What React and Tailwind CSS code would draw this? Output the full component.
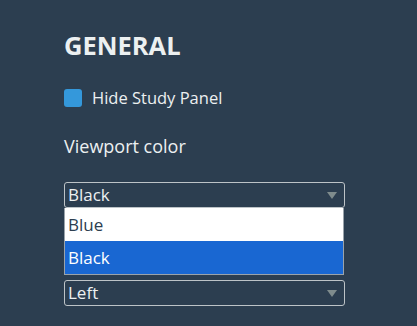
import { useState } from 'react'

const font = { fontFamily: '"Open Sans", "Noto Sans", sans-serif' }

function Arrow() {
  return (
    <svg width="10" height="7" viewBox="0 0 10 7" className="shrink-0">
      <path d="M0 0 L10 0 L5 7 Z" fill="#7f8c8d" />
    </svg>
  )
}

function SelectBox({ value }) {
  return (
    <div className="w-[281px] h-[26px] border border-[#bdc3c7] rounded-[3px] flex items-center justify-between pl-[3px] pr-[7px]">
      <span className="text-[17px] leading-[24px] text-[#ecf0f1]">{value}</span>
      <Arrow />
    </div>
  )
}

export default function App() {
  const [hide, setHide] = useState(false)
  const options = ['Blue', 'Black']
  const selected = 'Black'

  return (
    <div className="min-h-screen bg-[#2c3e50] pl-16 pt-[29px]" style={font}>
      <h2 className="text-[25.5px] leading-[32px] font-bold text-[#ecf0f1]">GENERAL</h2>

      <label className="mt-[25px] flex items-center gap-[10px] cursor-pointer">
        <span
          onClick={() => setHide(!hide)}
          className="w-[18px] h-[18px] rounded-[3px] bg-[#3498db]"
        />
        <span className="text-[16.5px] leading-[24px] text-[#ecf0f1]">Hide Study Panel</span>
      </label>

      <p className="mt-[24px] text-[18px] leading-[24px] text-[#ecf0f1]">Viewport color</p>

      <div className="mt-[24px]">
        <SelectBox value={selected} />
        <div className="w-[280px] border border-[#9aa3ab] border-t-0 bg-white">
          {options.map((o) => (
            <div
              key={o}
              className={`h-[33px] flex items-center pl-[3px] text-[17px] ${
                o === selected ? 'bg-[#1967d2] text-white' : 'bg-white text-[#2c3e50]'
              }`}
            >
              {o}
            </div>
          ))}
        </div>
      </div>

      <div className="mt-[5px]">
        <SelectBox value="Left" />
      </div>
    </div>
  )
}
